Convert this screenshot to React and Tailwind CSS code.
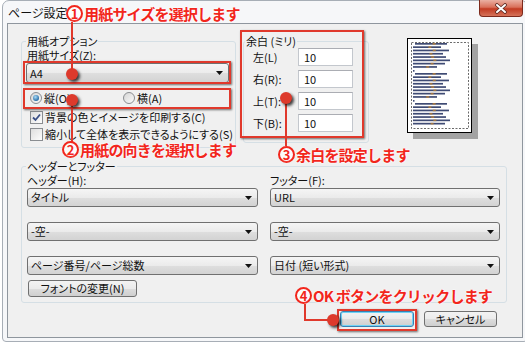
import React from "react";

const lineWidths = [34, 28, 36, 30, 33, 37, 32, 24];

const Dropdown = ({ label, className = "" }) => (
  <div
    className={`flex h-[19px] items-center justify-between rounded-[3px] border border-[#707070] bg-[linear-gradient(#f5f5f5,#ebebeb_50%,#dedede_52%,#d3d3d3)] pl-[3px] pr-[5px] leading-none ${className}`}
  >
    <span>{label}</span>
    <svg width="7" height="4" viewBox="0 0 7 4">
      <path d="M0 0h7L3.5 4z" fill="#111" />
    </svg>
  </div>
);

const Radio = ({ checked }) => (
  <span className="flex h-[12px] w-[12px] shrink-0 items-center justify-center rounded-full border border-[#8a8d91] bg-[linear-gradient(135deg,#d6d6d6,#fafafa)]">
    {checked && (
      <span className="h-[6px] w-[6px] rounded-full bg-[radial-gradient(circle_at_40%_35%,#a9dcf7,#2a6ea8_70%,#17466f)]" />
    )}
  </span>
);

const Checkbox = ({ checked }) => (
  <span className="flex h-[13px] w-[13px] shrink-0 items-center justify-center border border-[#8a8d91] bg-[linear-gradient(135deg,#dedede,#fdfdfd)]">
    {checked && (
      <svg width="9" height="9" viewBox="0 0 9 9">
        <path d="M1 4.5l2.5 2.5L8 1.5" stroke="#3a4f86" strokeWidth="1.8" fill="none" />
      </svg>
    )}
  </span>
);

const Button = ({ children, primary, className = "" }) => (
  <div
    className={`flex h-[16px] items-center justify-center rounded-[3px] border bg-[linear-gradient(#f3f3f3,#ebebeb_50%,#dddddd_52%,#cfcfcf)] leading-none ${
      primary
        ? "border-[#3c7fb1] shadow-[inset_0_0_0_1px_#6fd3f6]"
        : "border-[#707070]"
    } ${className}`}
  >
    {children}
  </div>
);

const MarginRow = ({ label }) => (
  <div className="ml-[7px] flex h-[18px] items-center">
    <span className="w-[45px]">{label}</span>
    <div className="flex h-[18px] w-[55px] items-center border border-[#c3c7cd] border-t-[#abadb3] bg-white pl-[5px] leading-none">
      10
    </div>
  </div>
);

const Preview = () => {
  const rows = [];
  [5, 35, 65].forEach((y0, b) => {
    const n = b === 2 ? 7 : 8;
    for (let i = 0; i < n; i++) {
      rows.push({ y: y0 + i * 3.3, x: i === 0 ? 8 : 6, w: lineWidths[i] - (i === 0 ? 2 : 0) });
    }
    if (b < 2) rows.push({ y: y0 + 27, x: 6, w: 1.5 });
  });
  return (
    <svg width="72" height="101" viewBox="0 0 72 101" className="ml-[38px] mt-[3px] shrink-0">
      <rect x="6" y="6" width="65" height="95" fill="#a3a3a3" />
      <rect x="0.5" y="0.5" width="64" height="94" fill="#fff" stroke="#000" />
      <rect x="4.5" y="4.5" width="57" height="86" fill="none" stroke="#6b6b6b" strokeDasharray="2 1.5" />
      {rows.map((r, i) => (
        <g key={i}>
          <rect x={r.x} y={r.y} width={r.w} height="1.7" fill="#1d2b5c" opacity="0.85" />
          {r.w > 10 && <rect x={r.x + r.w * 0.55} y={r.y} width="3" height="1.7" fill="#c9862e" opacity="0.7" />}
        </g>
      ))}
    </svg>
  );
};

const Pin = ({ className }) => (
  <div className={`absolute h-[12px] w-[12px] rounded-full bg-[#dd3a2c] shadow-[2px_2px_3px_rgba(0,0,0,0.75)] ${className}`} />
);

const Note = ({ n, text, className }) => (
  <div
    className={`absolute flex items-center text-[15px] font-bold leading-none tracking-[-0.8px] text-[#f2261c] [font-feature-settings:normal] [text-shadow:0_0_2px_#fff,0_0_2px_#fff] ${className}`}
  >
    <span className="mr-[1px] flex h-[17px] w-[17px] items-center justify-center rounded-full border-2 border-[#f2261c] bg-white/70 text-[13px] tracking-normal">
      {n}
    </span>
    <span>{text}</span>
  </div>
);

export default function App() {
  return (
    <div className="relative h-[343px] w-[525px] overflow-hidden bg-white font-['Noto_Sans_CJK_JP',sans-serif] text-[11px] leading-[13px] text-[#111] [font-feature-settings:'palt']">
      <div className="ml-[2px] flex h-[342px] w-[526px] flex-col rounded-t-[7px] rounded-b-[4px] border border-[#a7aeb6] bg-[#f6f7f9] px-[4px] pb-[3px]">
        {/* title bar */}
        <div className="flex h-[22px] shrink-0 items-start justify-between">
          <span className="ml-[1px] mt-[5px] text-[12px] leading-[14px] text-[#111]">ページ設定</span>
          <div className="-mt-px flex h-[17px] w-[44px] items-center justify-center rounded-b-[4px] border border-t-0 border-[#7d2a1c] bg-[linear-gradient(#eab0a2,#d9705a_45%,#c23b22_55%,#d5735a)]">
            <svg width="14" height="11" viewBox="0 0 14 11">
              <path d="M3 2l8 7M11 2l-8 7" stroke="#5a2a22" strokeWidth="3.6" strokeLinecap="round" />
              <path d="M3 2l8 7M11 2l-8 7" stroke="#fff" strokeWidth="2" strokeLinecap="round" />
            </svg>
          </div>
        </div>

        {/* client area */}
        <div className="flex flex-1 flex-col border border-[#8f969e] bg-[#f0f0f0]">
          <div className="flex items-start pl-[13px] pt-[11px]">
            <fieldset className="h-[113px] w-[215px] shrink-0 rounded-[3px] border border-[#d5dfe5] pl-[5px]">
              <legend className="-ml-px px-[1px] leading-[12px]">用紙オプション</legend>
              <div className="mt-[2px] h-[13px]">用紙サイズ(Z):</div>
              <Dropdown label="A4" className="-ml-px mt-[1px] h-[20px] w-[203px]" />
              <div className="mt-[8px] flex h-[14px] items-center">
                <div className="flex w-[96px] items-center gap-[2px] pl-[3px]">
                  <Radio checked />
                  <span>縦(O)</span>
                </div>
                <div className="flex items-center gap-[2px]">
                  <Radio />
                  <span>横(A)</span>
                </div>
              </div>
              <div className="mt-[5px] flex h-[14px] items-center gap-[2px] pl-[3px]">
                <Checkbox checked />
                <span>背景の色とイメージを印刷する(C)</span>
              </div>
              <div className="mt-[3px] flex h-[14px] items-center gap-[2px] pl-[3px]">
                <Checkbox />
                <span>縮小して全体を表示できるようにする(S)</span>
              </div>
            </fieldset>

            <fieldset className="ml-[7px] flex h-[108px] w-[126px] shrink-0 flex-col gap-[4px] rounded-[3px] border border-[#d5dfe5] pl-[2px]">
              <legend className="-ml-px px-[1px]">余白 (ミリ)</legend>
              <MarginRow label="左(L)" />
              <MarginRow label="右(R):" />
              <MarginRow label="上(T):" />
              <MarginRow label="下(B):" />
            </fieldset>

            <Preview />
          </div>

          <fieldset className="ml-[13px] mt-[12px] h-[143px] w-[486px] rounded-[3px] border border-[#d5dfe5] pl-[5px]">
            <legend className="-ml-px px-[1px] leading-[12px]">ヘッダーとフッター</legend>
            <div className="flex gap-[12px]">
              <div className="flex w-[231px] flex-col">
                <div className="mt-[2px] h-[13px]">ヘッダー(H):</div>
                <Dropdown label="タイトル" className="mt-[1px]" />
                <Dropdown label="-空-" className="mt-[15px]" />
                <Dropdown label="ページ番号/ページ総数" className="mt-[15px]" />
                <Button className="mt-[5px] h-[17px] w-[109px] ml-px">フォントの変更(N)</Button>
              </div>
              <div className="flex w-[230px] flex-col">
                <div className="mt-[2px] h-[13px]">フッター(F):</div>
                <Dropdown label="URL" className="mt-[1px]" />
                <Dropdown label="-空-" className="mt-[15px]" />
                <Dropdown label="日付 (短い形式)" className="mt-[15px]" />
              </div>
            </div>
          </fieldset>

          <div className="mt-[8px] flex justify-end gap-[10px] pr-[25px]">
            <Button primary className="w-[74px]">OK</Button>
            <Button className="w-[73px]">キャンセル</Button>
          </div>
        </div>
      </div>

      {/* annotations */}
      <div className="absolute left-[23px] top-[61px] h-[23px] w-[208px] border-2 border-[#e0392c] shadow-[1px_1px_2px_rgba(0,0,0,0.55)]" />
      <div className="absolute left-[23px] top-[88px] h-[21px] w-[208px] border-2 border-[#e0392c] shadow-[1px_1px_2px_rgba(0,0,0,0.55)]" />
      <div className="absolute left-[240px] top-[30px] h-[108px] w-[124px] border-2 border-[#e0392c] shadow-[1px_1px_2px_rgba(0,0,0,0.55)]" />
      <div className="absolute left-[337px] top-[309px] h-[22px] w-[80px] border-2 border-[#e0392c] shadow-[1px_1px_2px_rgba(0,0,0,0.55)]" />

      <div className="absolute left-[71px] top-[22px] h-[52px] w-[2px] bg-[#e0392c]" />
      <div className="absolute left-[71px] top-[100px] h-[42px] w-[2px] bg-[#e0392c]" />
      <div className="absolute left-[285px] top-[98px] h-[48px] w-[2px] bg-[#e0392c]" />
      <div className="absolute left-[304px] top-[304px] h-[17px] w-[2px] bg-[#e0392c]" />
      <div className="absolute left-[304px] top-[319px] h-[2px] w-[29px] bg-[#e0392c]" />

      <Pin className="left-[66px] top-[68px]" />
      <Pin className="left-[66px] top-[94px]" />
      <Pin className="left-[280px] top-[92px]" />
      <Pin className="left-[327px] top-[314px]" />

      <Note n="1" text="用紙サイズを選択します" className="left-[66px] top-[5px]" />
      <Note n="2" text="用紙の向きを選択します" className="left-[62px] top-[141px]" />
      <Note n="3" text="余白を設定します" className="left-[278px] top-[146px]" />
      <Note n="4" text="OK ボタンをクリックします" className="left-[295px] top-[287px]" />
    </div>
  );
}
